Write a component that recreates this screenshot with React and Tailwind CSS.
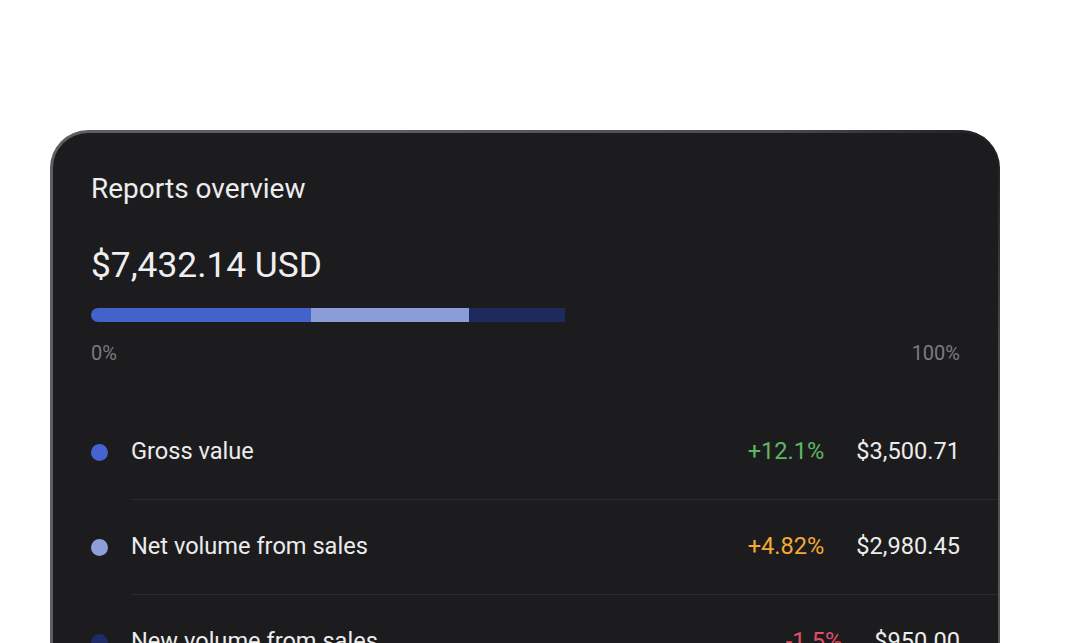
export default function App() {
  const rows = [
    { label: "Gross value", dot: "bg-[#4563d1]", pct: "+12.1%", pctColor: "text-[#5cb961]", value: "$3,500.71" },
    { label: "Net volume from sales", dot: "bg-[#8d9edb]", pct: "+4.82%", pctColor: "text-[#f3a935]", value: "$2,980.45" },
    { label: "New volume from sales", dot: "bg-[#1f2b63]", pct: "-1.5%", pctColor: "text-[#e04e68]", value: "$950.00" },
  ];
  return (
    <div className="w-[1080px] h-[643px] overflow-hidden bg-white" style={{ fontFamily: "Roboto, 'Noto Sans', sans-serif" }}>
      <div className="ml-[50px] mt-[130px] w-[950px] h-[600px] rounded-t-[38px] bg-[linear-gradient(225deg,#1c1c1e_0%,#4a4a4c_14%,#5e5e60_40%)] pl-[3px] pr-[2px] pt-[3px]">
        <div className="h-full rounded-t-[35px] bg-[#1c1c1e] px-[38px] pt-[40px]">
          <div className="text-[28px] leading-[32px] text-[#ededed] font-normal">Reports overview</div>
          <div className="mt-[40px] text-[35.3px] leading-[40px] text-[#efefef]">$7,432.14 USD</div>
          <div className="mt-[23px] flex h-[14px] w-[474px]">
            <div className="w-[220px] rounded-l-full bg-[#4262cc]" />
            <div className="w-[158px] bg-[#8b9cd8]" />
            <div className="flex-1 bg-[#1e2a5c]" />
          </div>
          <div className="mt-[19px] flex justify-between text-[20px] leading-[24px] text-[#7b7b7d]">
            <span>0%</span>
            <span>100%</span>
          </div>
          <div className="mt-[40px]">
            {rows.map((r) => (
              <div key={r.label} className="flex items-center">
                <div className={`h-[17px] w-[17px] shrink-0 rounded-full ${r.dot}`} />
                <div className="ml-[23px] mr-[-38px] flex h-[95px] flex-1 items-center border-b border-[#2b2b2d] pr-[38px]">
                  <span className="flex-1 text-[23.6px] text-[#ececec]">{r.label}</span>
                  <span className={`text-[23.6px] ${r.pctColor}`}>{r.pct}</span>
                  <span className="ml-[32px] text-[23.6px] text-[#ececec]">{r.value}</span>
                </div>
              </div>
            ))}
          </div>
        </div>
      </div>
    </div>
  );
}
